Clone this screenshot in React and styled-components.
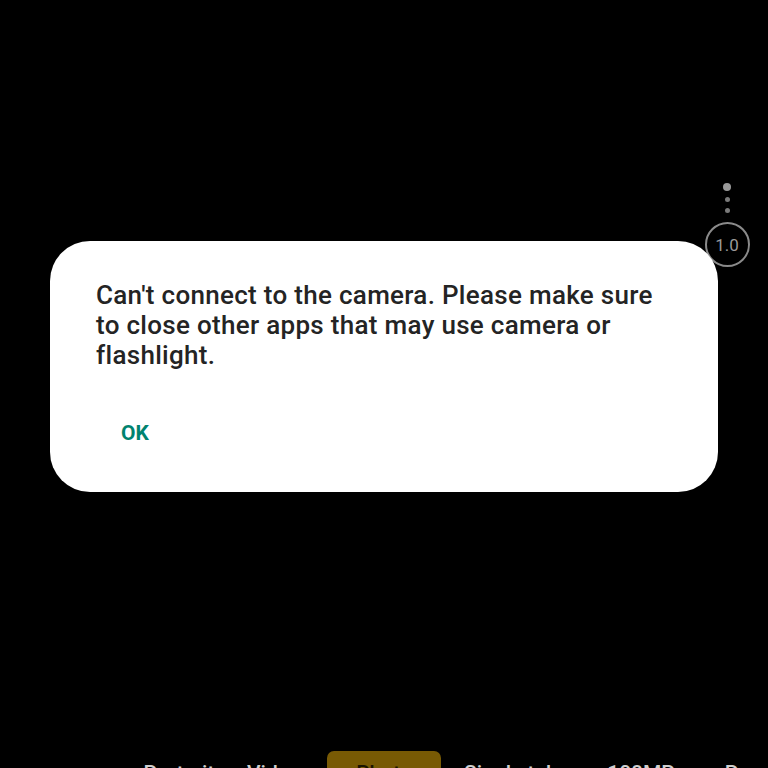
import React from "react";
import styled, { createGlobalStyle } from "styled-components";

const GlobalStyle = createGlobalStyle`
  html, body {
    margin: 0;
    padding: 0;
    background: #000;
  }
  body {
    font-family: Roboto, "Noto Sans", "Liberation Sans", sans-serif;
  }
`;

const Screen = styled.div`
  position: relative;
  width: 768px;
  height: 768px;
  background: #000;
  overflow: hidden;
  display: flex;
  flex-direction: column;
`;

const ZoomControl = styled.div`
  position: absolute;
  top: 183px;
  left: 703px;
  width: 48px;
  display: flex;
  flex-direction: column;
  align-items: center;
`;

const Dot = styled.span`
  width: ${({ size }) => size}px;
  height: ${({ size }) => size}px;
  border-radius: 50%;
  background: ${({ light }) => (light ? "#9a9a9a" : "#7a7a7a")};
  margin-bottom: ${({ gap }) => gap}px;
`;

const ZoomRing = styled.div`
  width: 45px;
  height: 45px;
  box-sizing: border-box;
  border: 2px solid #8a8a8a;
  border-radius: 50%;
  display: flex;
  align-items: center;
  justify-content: center;
  color: #9a9a9a;
  font-size: 17px;
  font-weight: 400;
`;

const Dialog = styled.div`
  position: relative;
  z-index: 1;
  margin: 241px 0 0 50px;
  width: 668px;
  height: 251px;
  box-sizing: border-box;
  background: #fff;
  border-radius: 40px;
  padding: 39px 50px 0 46px;
`;

const Message = styled.p`
  margin: 0;
  font-size: 26px;
  line-height: 30px;
  font-weight: 500;
  color: #242424;
  letter-spacing: 0.3px;
`;

const Actions = styled.div`
  display: flex;
  margin-top: 51px;
  padding-left: 25px;
`;

const TextButton = styled.button`
  border: none;
  background: none;
  padding: 0;
  font-family: inherit;
  font-size: 21px;
  line-height: 24px;
  font-weight: 700;
  color: #00836f;
  cursor: pointer;
`;

const ModeBar = styled.div`
  margin-top: auto;
  height: 17px;
  display: flex;
  justify-content: flex-start;
  align-items: flex-start;
  gap: 20px;
  padding-left: 137px;
`;

const Mode = styled.div`
  flex: none;
  height: 40px;
  box-sizing: border-box;
  padding-top: 10px;
  width: ${({ w }) => w}px;
  border-radius: 7px;
  background: ${({ active }) => (active ? "#785a04" : "transparent")};
  color: ${({ active }) => (active ? "#1a1400" : "#cfcfcf")};
  font-size: 21px;
  font-weight: 500;
  text-align: center;
  white-space: nowrap;
`;

const modes = [
  { label: "Portrait", w: 84 },
  { label: "Video", w: 66 },
  { label: "Photo", w: 114, active: true },
  { label: "Single take", w: 110 },
  { label: "108MP", w: 100 },
  { label: "Pro", w: 60 },
];

export default function App() {
  return (
    <>
      <GlobalStyle />
      <Screen>
        <ZoomControl>
          <Dot size={8} light gap={6} />
          <Dot size={5} gap={6} />
          <Dot size={5} gap={9} />
          <ZoomRing>1.0</ZoomRing>
        </ZoomControl>

        <Dialog>
          <Message>
            Can't connect to the camera. Please make sure to close other apps
            that may use camera or flashlight.
          </Message>
          <Actions>
            <TextButton>OK</TextButton>
          </Actions>
        </Dialog>

        <ModeBar>
          {modes.map((m) => (
            <Mode key={m.label} w={m.w} active={m.active}>
              {m.label}
            </Mode>
          ))}
        </ModeBar>
      </Screen>
    </>
  );
}
